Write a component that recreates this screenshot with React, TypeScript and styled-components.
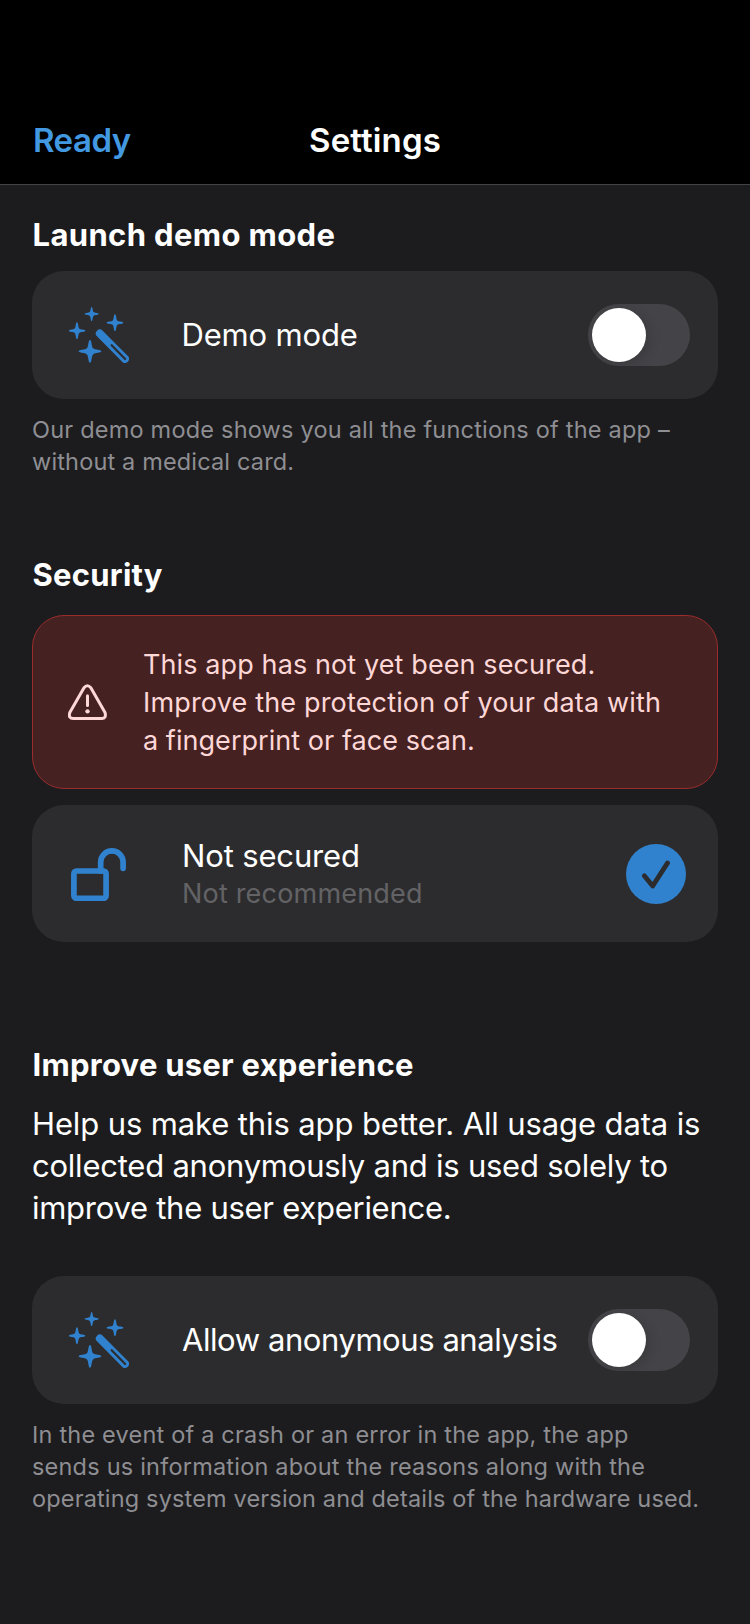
import React, { useState } from 'react';
import styled, { createGlobalStyle } from 'styled-components';

const GlobalStyle = createGlobalStyle`
  * { box-sizing: border-box; }
  body {
    margin: 0;
    background: #1c1c1e;
    color: #fff;
    font-family: Inter, "Liberation Sans", sans-serif;
  }
`;

const Screen = styled.div`
  width: 750px;
  min-height: 1624px;
  background: #1c1c1e;
`;

const NavBar = styled.header`
  display: grid;
  grid-template-columns: 1fr auto 1fr;
  height: 185px;
  padding: 120px 33px 0;
  background: #000;
  border-bottom: 1px solid #434344;
`;

const NavButton = styled.button`
  justify-self: start;
  height: 40px;
  padding: 0;
  border: 0;
  background: none;
  color: #4299e1;
  font: 600 33px/40px Inter, sans-serif;
  letter-spacing: -0.5px;
`;

const NavTitle = styled.h1`
  margin: 0;
  font-size: 33px;
  line-height: 40px;
  font-weight: 600;
  letter-spacing: 0.12px;
`;

const Content = styled.main`
  display: flex;
  flex-direction: column;
  padding: 31px 32px 0;
`;

const Section = styled.section<{ $space?: number }>`
  display: flex;
  flex-direction: column;
  margin-bottom: ${(p) => p.$space ?? 0}px;
`;

const Heading = styled.h2<{ $gap: number; $track?: number }>`
  margin: 0 0 ${(p) => p.$gap}px;
  padding-left: 0.5px;
  font-size: 31px;
  line-height: 38px;
  font-weight: 700;
  letter-spacing: ${(p) => p.$track ?? 0.25}px;
`;

const Card = styled.div<{ $height: number; $right: number }>`
  display: flex;
  align-items: center;
  height: ${(p) => p.$height}px;
  padding: 0 ${(p) => p.$right}px 0 37px;
  border-radius: 32px;
  background: #2c2c2e;
`;

const IconSlot = styled.div<{ $width: number; $indent?: number; $drop?: number }>`
  display: flex;
  flex: 0 0 ${(p) => p.$width}px;
  padding-left: ${(p) => p.$indent ?? 0}px;
  padding-top: ${(p) => p.$drop ?? 0}px;
`;

const Labels = styled.div`
  display: flex;
  flex: 1;
  flex-direction: column;
  gap: 1px;
  white-space: nowrap;
`;

const Label = styled.span<{ $track?: number }>`
  font-size: 31px;
  line-height: 38px;
  letter-spacing: ${(p) => p.$track ?? -0.18}px;
`;

const SubLabel = styled.span`
  color: #636366;
  font-size: 27px;
  line-height: 36px;
  margin-bottom: -2px;
  letter-spacing: 0.19px;
`;

const Track = styled.button`
  display: flex;
  align-items: center;
  width: 102px;
  height: 62px;
  padding: 0 4px;
  border: 0;
  border-radius: 31px;
  background: #444347;
  overflow: hidden;
`;

const Knob = styled.span<{ $on: boolean }>`
  width: 54px;
  height: 54px;
  border-radius: 50%;
  background: #fff;
  box-shadow: 3px 3px 12px rgba(0, 0, 0, 0.15);
  transform: translateX(${(p) => (p.$on ? 40 : 0)}px);
`;

const Line = styled.span<{ $track: number }>`
  display: block;
  letter-spacing: ${(p) => p.$track}px;
  white-space: nowrap;
`;

const Footnote = styled.p`
  margin: 15px 0 0;
  color: #8e8e93;
  font-size: 23.5px;
  line-height: 32px;
`;

const Body = styled.p`
  margin: 0 0 47px;
  font-size: 31px;
  line-height: 42px;
`;

const Alert = styled.div`
  display: flex;
  align-items: center;
  height: 174px;
  margin-bottom: 16px;
  padding-left: 35px;
  border: 1px solid #9b2c2c;
  border-radius: 32px;
  background: #452122;
  color: #fed7d7;
`;

const AlertText = styled.p`
  margin: 2px 0 0;
  font-size: 27px;
  line-height: 38px;
`;

const star = (x: number, y: number, r: number) => (
  <path
    transform={`translate(${x} ${y}) scale(${r})`}
    d="M0-1C.16-1 .12-.42 .27-.27C.42-.12 1-.16 1 0C1 .16 .42 .12 .27 .27C.12 .42 .16 1 0 1C-.16 1-.12 .42-.27 .27C-.42 .12-1 .16-1 0C-1-.16-.42-.12-.27-.27C-.12-.42-.16-1 0-1Z"
  />
);

const WandIcon = () => (
  <svg width="60" height="56" viewBox="27 22 180 168" fill="#3182ce">
    {star(95, 43, 21)}
    {star(165, 69, 25)}
    {star(51, 93, 25)}
    {star(90, 155, 34)}
    <path d="M119.500 101.500L195 177.500" stroke="#3182ce" strokeWidth="24" strokeLinecap="round" />
    <path d="M155 136.500L195.500 178" stroke="#2c2c2e" strokeWidth="6.500" strokeLinecap="round" />
  </svg>
);

const WarningIcon = () => (
  <svg width="39" height="36" viewBox="144 402.500 117 108" fill="none" stroke="#fed7d7" strokeWidth="9" strokeLinecap="round">
    <path d="M192 414Q202 402 212.500 414L255 488Q260 506 245 506H160Q144 506 149.500 488Z" strokeLinejoin="round" />
    <path d="M202.500 438V467" />
    <circle cx="202.500" cy="484.500" r="6.500" fill="#fed7d7" stroke="none" />
  </svg>
);

const UnlockIcon = () => (
  <svg width="55" height="53" viewBox="0 0 55 53" fill="none" stroke="#3182ce" strokeWidth="5.700">
    <rect x="2.900" y="23" width="32.200" height="27.300" rx="2.500" />
    <path d="M29.700 23V14.100A11.200 11.200 0 0 1 52.100 14.100V20.300" strokeLinecap="round" />
  </svg>
);

const CheckIcon = () => (
  <svg width="60" height="60" viewBox="0 0 60 60" fill="none">
    <circle cx="30" cy="30" r="30" fill="#3182ce" />
    <path d="M18.300 31.800L26.700 42L41.500 19" stroke="#2c2c2e" strokeWidth="4.900" strokeLinecap="round" strokeLinejoin="round" />
  </svg>
);

const Toggle = ({ label }: { label: string }) => {
  const [on, setOn] = useState(false);
  return (
    <Track role="switch" aria-checked={on} aria-label={label} onClick={() => setOn(!on)}>
      <Knob $on={on} />
    </Track>
  );
};

const ToggleCard = ({ label, track, slot }: { label: string; track?: number; slot: number }) => (
  <Card $height={128} $right={28}>
    <IconSlot $width={slot}>
      <WandIcon />
    </IconSlot>
    <Labels>
      <Label $track={track}>{label}</Label>
    </Labels>
    <Toggle label={label} />
  </Card>
);

export default function App() {
  return (
    <Screen>
      <GlobalStyle />
      <NavBar>
        <NavButton>Ready</NavButton>
        <NavTitle>Settings</NavTitle>
      </NavBar>
      <Content>
        <Section $space={78}>
          <Heading $gap={17} $track={0.36}>Launch demo mode</Heading>
          <ToggleCard label="Demo mode" slot={112.5} />
          <Footnote>
            <Line $track={0.21}>Our demo mode shows you all the functions of the app –</Line>
            <Line $track={0.16}>without a medical card.</Line>
          </Footnote>
        </Section>
        <Section $space={104}>
          <Heading $gap={21}>Security</Heading>
          <Alert>
            <IconSlot $width={75}>
              <WarningIcon />
            </IconSlot>
            <AlertText>
              <Line $track={0.11}>This app has not yet been secured.</Line>
              <Line $track={0.17}>Improve the protection of your data with</Line>
              <Line $track={0.05}>a fingerprint or face scan.</Line>
            </AlertText>
          </Alert>
          <Card $height={137} $right={32}>
            <IconSlot $width={113} $indent={2} $drop={2}>
              <UnlockIcon />
            </IconSlot>
            <Labels>
              <Label $track={-0.15}>Not secured</Label>
              <SubLabel>Not recommended</SubLabel>
            </Labels>
            <CheckIcon />
          </Card>
        </Section>
        <Section>
          <Heading $gap={19}>Improve user experience</Heading>
          <Body>
            <Line $track={-0.12}>Help us make this app better. All usage data is</Line>
            <Line $track={-0.23}>collected anonymously and is used solely to</Line>
            <Line $track={-0.27}>improve the user experience.</Line>
          </Body>
          <ToggleCard label="Allow anonymous analysis" track={-0.43} slot={113} />
          <Footnote>
            <Line $track={0.2}>In the event of a crash or an error in the app, the app</Line>
            <Line $track={0.21}>sends us information about the reasons along with the</Line>
            <Line $track={0.16}>operating system version and details of the hardware used.</Line>
          </Footnote>
        </Section>
      </Content>
    </Screen>
  );
}
